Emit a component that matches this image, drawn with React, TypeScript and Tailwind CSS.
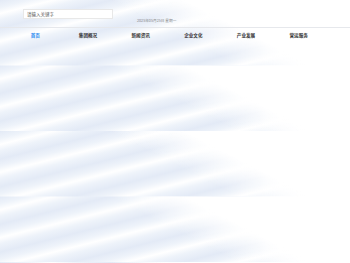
const navItems = ['首页', '集团概况', '新闻资讯', '企业文化', '产业发展', '营运服务']

export default function App() {
  return (
    <div
      className="min-h-[263px] w-[350px] bg-white bg-repeat-y bg-size-[305px_65.5px] bg-[linear-gradient(27deg,rgba(255,255,255,0)_55%,#fff_72%),linear-gradient(to_right,rgba(255,255,255,0)_85%,#fff_100%),repeating-linear-gradient(166deg,#e3eaf6_0px,#eef3fa_7px,#fff_13px,#eef3fa_19px,#e3eaf6_27px)] font-['Noto_Sans_CJK_SC',sans-serif]"
    >
      {/* top bar */}
      <div className="flex h-[28px] items-start border-b border-[#e6e8ec]">
        <div className="ml-[23px] mt-[9px] flex h-[10px] w-[90px] items-center border border-[#e8e8e8] bg-white pl-[3px] text-[4.5px] leading-none text-[#555]">
          请输入关键字
        </div>
        <div className="ml-[24px] mt-[18.5px] text-[3.7px] leading-none text-[#888]">
          2025年05月25日 星期一
        </div>
      </div>

      {/* nav */}
      <nav className="grid w-[325px] grid-cols-6 pl-[9px] pt-[4px]">
        {navItems.map((item, i) => (
          <div
            key={item}
            className={`text-center text-[4.6px] font-bold leading-[6px] ${i === 0 ? 'text-[#2d8cf0]' : 'text-[#333]'}`}
          >
            {item}
          </div>
        ))}
      </nav>
    </div>
  )
}
